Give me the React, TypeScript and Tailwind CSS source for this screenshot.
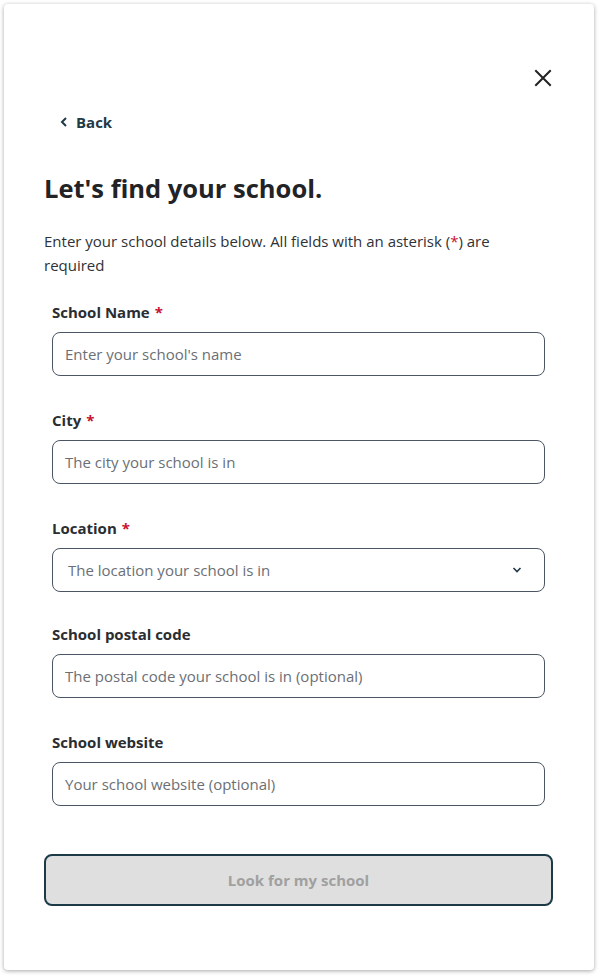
import React from "react";

const Req = () => <span className="text-[#c8102e] ml-[5px]">*</span>;

function Field({ label, required, placeholder, top }: { label: string; required?: boolean; placeholder: string; top: string }) {
  return (
    <div className={`${top} px-[8px]`}>
      <div className="text-[15px] leading-[20px] font-bold text-[#2a2d31]">
        {label}
        {required && <Req />}
      </div>
      <div className="mt-[10px] h-[44px] rounded-[8px] border border-[#4b5563] flex items-center px-[12px] text-[15px] text-[#6b6f75]">
        {placeholder}
      </div>
    </div>
  );
}

export default function App() {
  return (
    <div className="bg-white p-[4px] w-[599px] h-[977px]" style={{ fontFamily: "'Open Sans', Lato, sans-serif" }}>
      <div className="w-[590px] h-[966px] bg-white rounded-[4px] shadow-[0_1px_4px_rgba(0,0,0,0.35)] pl-[40px] pr-[41px]">
        <div className="flex justify-end pt-[65px] pr-[1px]">
          <svg width="18" height="18" viewBox="0 0 18 18" fill="none" stroke="#222" strokeWidth="2" strokeLinecap="square">
            <path d="M2 2L16 16M16 2L2 16" />
          </svg>
        </div>
        <div className="mt-[25px] ml-[16px] flex items-center gap-[8px] text-[#1f3a48] text-[15px] font-bold leading-[20px]">
          <svg width="8" height="12" viewBox="0 0 8 12" fill="none" stroke="#1f3a48" strokeWidth="2">
            <path d="M6 2L2 6L6 10" />
          </svg>
          Back
        </div>
        <h1 className="mt-[39px] text-[25.5px] leading-[34px] font-bold text-[#212326]">Let's find your school.</h1>
        <p className="mt-[24px] text-[15px] leading-[24px] text-[#2f3236] pr-[20px]">
          Enter your school details below. All fields with an asterisk (<span className="text-[#c8102e]">*</span>) are required
        </p>
        <Field top="mt-[25px]" label="School Name" required placeholder="Enter your school's name" />
        <Field top="mt-[34px]" label="City" required placeholder="The city your school is in" />
        <div className="mt-[34px] px-[8px]">
          <div className="text-[15px] leading-[20px] font-bold text-[#2a2d31]">
            Location
            <Req />
          </div>
          <div className="mt-[10px] h-[44px] rounded-[8px] border border-[#4b5563] flex items-center justify-between pl-[15px] pr-[22px] text-[15px] text-[#6b6f75]">
            The location your school is in
            <svg width="10" height="6" viewBox="0 0 10 6" fill="none" stroke="#1f3a48" strokeWidth="1.6">
              <path d="M1.5 1L5 4.5L8.5 1" />
            </svg>
          </div>
        </div>
        <Field top="mt-[32px]" label="School postal code" placeholder="The postal code your school is in (optional)" />
        <Field top="mt-[34px]" label="School website" placeholder="Your school website (optional)" />
        <button className="mt-[48px] w-full h-[52px] rounded-[8px] border-2 border-[#1c3a47] bg-[#dfdfdf] text-[15px] font-bold text-[#a0a0a0]">
          Look for my school
        </button>
      </div>
    </div>
  );
}
